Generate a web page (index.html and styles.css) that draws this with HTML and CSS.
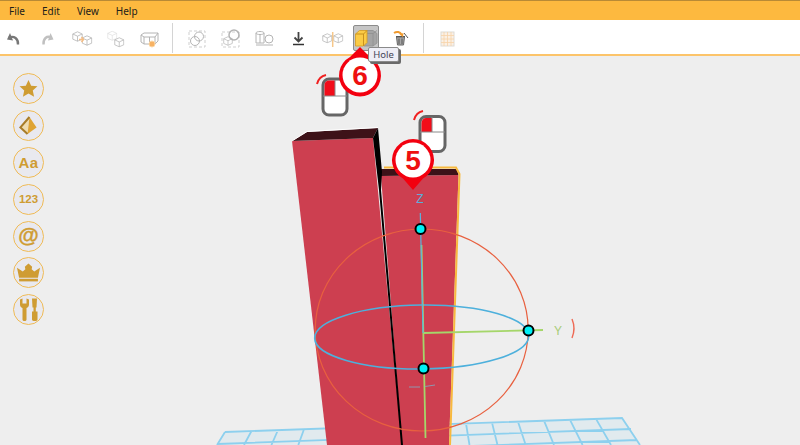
FILE: index.html
```html
<!DOCTYPE html>
<html lang="en">
<head>
<meta charset="utf-8">
<title>3D modeller</title>
<link rel="stylesheet" href="styles.css">
</head>
<body>
<svg class="defs" width="0" height="0" aria-hidden="true">
  <defs>
    <symbol id="cube" viewBox="0 0 14 14">
      <path d="M7 1 13 3.8V10.4L7 13 1 10.4V3.8Z M1 3.8 7 6.6 13 3.8 M7 6.6V13"/>
    </symbol>
  </defs>
</svg>
<div class="app">
  <nav class="menubar">
    <span>File</span><span>Edit</span><span>View</span><span>Help</span>
  </nav>
  <div class="toolbar">
    <div class="group">
      <div class="tool"><svg viewBox="0 0 28 28"><path class="undo" d="M18 20.500C18.500 14.500 14 11.500 9 13.500"/><path class="undo-head" d="M10 9 7 15.500 13 16.500Z"/></svg></div>
      <div class="tool"><svg viewBox="0 0 28 28"><path class="redo" d="M9.500 20.500C9 14.500 13 11.500 17 13.500"/><path class="redo-head" d="M16.500 9 19.500 15.500 14 16.500Z"/></svg></div>
      <div class="tool"><svg viewBox="0 0 28 28"><use class="cube" href="#cube" x="4" y="7" width="11" height="11"/><use class="cube" href="#cube" x="13.500" y="11" width="11" height="11"/><path class="accent" d="M11 15.500H15.500M13.500 13 15.500 15.500 13.500 18"/></svg></div>
      <div class="tool"><svg viewBox="0 0 28 28"><use class="cube faint" href="#cube" x="5" y="6.500" width="10.500" height="10.500"/><use class="cube" href="#cube" x="12" y="13" width="10.500" height="10.500"/></svg></div>
      <div class="tool"><svg viewBox="0 0 28 28"><path class="cube" d="M5 11 8 9H22V17L19 20H8L5 18Z M5 11 8 13H19L22 9 M8 13V20M13.500 13V20M19 13V20"/><circle class="dot" cx="16" cy="20" r="3"/></svg></div>
    </div>
    <div class="divider"></div>
    <div class="group">
      <div class="tool"><svg viewBox="0 0 28 28"><rect class="sel" x="7" y="7" width="16" height="16"/><circle class="cube" cx="17" cy="12.500" r="4.500"/><circle class="cube" cx="13" cy="17" r="4.500"/></svg></div>
      <div class="tool"><svg viewBox="0 0 28 28"><rect class="sel" x="6" y="8" width="17" height="15"/><circle class="cube thick" cx="18" cy="11" r="5"/><use class="cube" href="#cube" x="7" y="12" width="10" height="10"/></svg></div>
      <div class="tool"><svg viewBox="0 0 28 28"><path class="cube" d="M6 9C6 7 14 7 14 9V19H6Z M6 9C6 11 14 11 14 9 M10 10V19M6 21H23"/><circle class="cube" cx="19" cy="15" r="4"/></svg></div>
      <div class="tool"><svg viewBox="0 0 28 28"><path class="dark" d="M14.500 8V17M10.500 13.500 14.500 17.500 18.500 13.500"/><path class="dark-line" d="M9 20.500H20"/></svg></div>
      <div class="tool"><svg viewBox="0 0 28 28"><use class="cube" href="#cube" x="4" y="9" width="10.500" height="10.500"/><use class="cube" href="#cube" x="15" y="9" width="10.500" height="10.500"/><path class="split" d="M14.700 8V23"/></svg></div>
      <div class="tool tool-active"><svg viewBox="0 0 24 24"><path class="hole-back" d="M11 4.500H19L23 7.500V17L19 20H10Z"/><path class="hole-line" d="M12 7.500H19L23 4.500M19 7.500V20"/><path class="hole-front" d="M1.500 8 5.500 4.500H13V16.500L9.500 20H1.500Z"/><path class="hole-edge" d="M1.500 8H9.500L13 4.500M9.500 8V20"/></svg></div>
      <div class="tool"><svg viewBox="0 0 28 28"><path class="trash" d="M10.500 13H18.500L17.500 21H11.500Z"/><path class="trash-line" d="M10 12.500H19M13 14.500V20M16 14.500V20M18 9 22 14"/><path class="trash-arrow" d="M8 9C11 7 14 8 15.500 10.500"/><path class="trash-head" d="M13.500 10.500 17 13 17.500 9Z"/></svg></div>
    </div>
    <div class="divider divider-last"></div>
    <div class="group">
      <div class="tool"><svg viewBox="0 0 28 28"><rect class="sheet" x="8" y="8" width="13" height="14"/><path class="sheet-line" d="M11 8V22M14.500 8V22M18 8V22M8 11.500H21M8 15H21M8 18.500H21"/></svg></div>
    </div>
  </div>
  <main class="stage">
    <svg class="scene" viewBox="0 55 800 390" width="800" height="390">
      <polygon class="grid-fill" points="225,432 622,418 640,445 217,445"/>
      <path class="grid-line" d="M225 432 622 418 640 445M225 432 217 445M217 444 631 429M470 446 637 440M251.500 431 244 445M278 430 271.400 445M304 429.200 298.300 445M466 423.500 469.500 445M492 422.600 497.500 445M518 421.700 525.700 445M544 420.700 554 445M570 419.800 582.600 445M596 418.900 611 445"/>
      <polygon class="bar" points="381,176 458.500,175 449,445 402,445"/>
      <polygon class="bar-top" points="380,169 457,169 458.500,175 381,176"/>
      <polyline class="outline" points="384,167.500 456,167.500 459.500,174 450,445"/>
      <polygon class="bar" points="292,141 373,138 402,445 327,445"/>
      <polygon class="bar-top" points="292,141 307,132 378,128 373,138"/>
      <polyline class="bar-rim" points="292,141 307,131.500 378,127.500"/>
      <polygon class="bar-edge" points="378,128 382,172 381,190 403,445 401,445 379,190 373,138"/>

      <ellipse class="ball-red" cx="421.700" cy="330" rx="106.500" ry="101"/>
      <ellipse class="ball-blue" cx="421.700" cy="337" rx="107" ry="32" transform="rotate(-0.6 421.700 337)"/>
      <path class="axis-green" d="M421.500 245 425.500 438M423 333 543 330"/>
      <path class="axis-blue" d="M420.300 213 423 333"/>
      <path class="dash" d="M409 387H420M425 386.500 435 385"/>
      <path class="rot-mark" d="M572 319C574.500 325 574.500 332 572 338"/>
      <text class="axis-label axis-z" x="420" y="203">Z</text>
      <text class="axis-label axis-y" x="558" y="335">Y</text>
      <circle class="handle" cx="420.500" cy="229" r="5"/>
      <circle class="handle" cx="528.500" cy="330.500" r="5"/>
      <circle class="handle" cx="423.500" cy="368.500" r="5"/>
    </svg>
    <aside class="rail">
      <div class="rail-btn"><svg viewBox="0 0 20 20"><path class="gold" d="M10 1 12.800 7 19.400 7.700 14.500 12.100 15.900 18.600 10 15.300 4.100 18.600 5.500 12.100 .6 7.700 7.200 7Z"/></svg></div>
      <div class="rail-btn"><svg viewBox="0 0 20 20"><path class="gold-soft" d="M11 1 1.500 12 9 19Z"/><path class="gold-face" d="M11 1 18.500 12 9 19Z"/><path class="gold-dark" d="M11 1 1.500 12 9 19"/></svg></div>
      <div class="rail-btn rail-text">Aa</div>
      <div class="rail-btn rail-num">123</div>
      <div class="rail-btn rail-at">@</div>
      <div class="rail-btn rail-wide"><svg viewBox="0 0 22 20"><path class="gold" d="M2 15 0 5.500 5.500 9 8 7 7.500 4.500 11 1.500 14.500 4.500 14 7 16.500 9 22 5.500 20 15Z"/><rect class="gold" x="2" y="16" width="18" height="2.500"/></svg></div>
      <div class="rail-btn rail-tall"><svg viewBox="0 0 22 24"><path class="gold" d="M2 2V7C2 9 3 10 4.500 10.500V22C4.500 24 8.500 24 8.500 22V10.500C10 10 11 9 11 7V2L8.500 1V6H4.500V1Z"/><path class="gold" d="M14 1H19L18.500 10H17.800V14H19.500V22C19.500 24 14 24 14 22V14H15.500V10H14.500Z"/></svg></div>
    </aside>
  </main>
  <svg class="notes" viewBox="0 0 800 445" width="800" height="445">
    <g class="mouse">
      <rect class="m-body" x="323" y="79" width="24" height="36" rx="6"/>
      <path class="m-key" d="M324.500 96V85C324.500 82 326.500 80.500 329 80.500H335V96Z"/>
      <path class="m-line" d="M323 96H347M335 80V96"/>
      <path class="m-arc" d="M317 84C318 80 321 76 326 75"/>
    </g>
    <g class="mouse">
      <rect class="m-body" x="420" y="116.500" width="25" height="35" rx="6"/>
      <path class="m-key" d="M421.500 132V123C421.500 120 423.500 118 426 118H432V132Z"/>
      <path class="m-line" d="M420 132H445M432 117V132"/>
      <path class="m-arc" d="M414 120C415 116 418 112 423 111"/>
    </g>
    <g>
      <path class="pin" d="M360 47 370 57A21 21 0 1 1 350 57Z"/>
      <circle class="pin-face" cx="360" cy="75" r="17.500"/>
      <text class="pin-text" x="360" y="85">6</text>
    </g>
    <g>
      <path class="pin" d="M413 190 403 178.500A21 21 0 1 1 423 178.500Z"/>
      <circle class="pin-face" cx="413" cy="160" r="17.500"/>
      <text class="pin-text" x="413" y="170">5</text>
    </g>
  </svg>
  <div class="tooltip">Hole</div>
</div>
</body>
</html>
```
FILE: styles.css
```css
* { box-sizing: border-box; }
html, body { margin: 0; padding: 0; }
body {
  width: 800px;
  height: 445px;
  overflow: hidden;
  background: #eeeeee;
  font-family: "Noto Sans", "Liberation Sans", sans-serif;
}
.defs { position: absolute; }
.app { position: relative; width: 800px; height: 445px; }

.menubar {
  height: 20px;
  display: flex;
  align-items: center;
  gap: 17px;
  padding-left: 9px;
  background: #fdb93f;
  border-top: 1px solid #b98a35;
  font-size: 10px;
  color: #22201a;
}
.toolbar {
  height: 36px;
  display: flex;
  align-items: center;
  padding-top: 2px;
  background: #ffffff;
  border-bottom: 2px solid #fcc46a;
}
.group { display: flex; gap: 6px; }
.tool {
  width: 28px;
  height: 28px;
  display: flex;
  align-items: center;
  justify-content: center;
}
.tool svg { width: 28px; height: 28px; flex: none; display: block; fill: none; filter: blur(.35px); }
.tool-active svg { width: 24px; height: 24px; }
.tool-active {
  width: 26px;
  height: 26px;
  margin: 1px;
  background: #c6c6c6;
  border: 1.500px solid #8c8c8c;
  border-radius: 2px;
}
.divider { width: 1px; height: 30px; margin: 0 9px 0 8px; background: #d4d4d4; }
.divider-last { margin: 0 9px; }

.undo { fill: none; stroke: #777777; stroke-width: 2.400; }
.undo-head { fill: #777777; }
.redo { fill: none; stroke: #c0c0c0; stroke-width: 2.400; }
.redo-head { fill: #c0c0c0; }
.cube { fill: none; stroke: #b4b4b4; stroke-width: 1; }
.cube.faint { stroke: #e0e0e0; }
.cube.thick { stroke-width: 1.500; }
.accent { fill: none; stroke: #f5bd84; stroke-width: 1.500; }
.dot { fill: #f7b264; stroke: #fbd7a6; stroke-width: 1; }
.sel { fill: none; stroke: #cfcfcf; stroke-width: 1; stroke-dasharray: 3 2; }
.dark { fill: none; stroke: #444444; stroke-width: 1.800; }
.dark-line { fill: none; stroke: #333333; stroke-width: 1.500; }
.split { fill: none; stroke: #f6c78a; stroke-width: 1.500; }
.hole-back { fill: #a4a4a4; stroke: #8f8f8f; stroke-width: .8; }
.hole-line { fill: none; stroke: #8f8f8f; stroke-width: .8; }
.hole-front { fill: #fbcb45; stroke: #d69c20; stroke-width: .8; }
.hole-edge { fill: none; stroke: #c9921e; stroke-width: 1; }
.trash { fill: #a6a6a6; stroke: #666666; stroke-width: 1; }
.trash-line { fill: none; stroke: #555555; stroke-width: 1; }
.trash-arrow { fill: none; stroke: #f09a2e; stroke-width: 2; }
.trash-head { fill: #f09a2e; }
.sheet { fill: #fbf0e4; stroke: #dedbd6; stroke-width: 1; }
.sheet-line { fill: none; stroke: #f8d3a8; stroke-width: .8; }

.stage { position: relative; height: 389px; overflow: hidden; }
.scene { position: absolute; left: 0; top: -1px; display: block; }
.grid-fill { fill: #e1eaee; }
.grid-line { fill: none; stroke: #8dd0ee; stroke-width: 1.800; }
.bar { fill: #cd3f50; }
.bar-top { fill: #3d1218; }
.bar-rim { fill: none; stroke: #ffffff; stroke-width: 1; }
.bar-edge { fill: #000000; }
.outline { fill: none; stroke: #f8b93e; stroke-width: 2; }
.ball-red { fill: none; stroke: #e8603f; stroke-width: 1.200; }
.ball-blue { fill: none; stroke: #4db0dc; stroke-width: 1.600; }
.axis-green { fill: none; stroke: #a5d66a; stroke-width: 1.800; }
.axis-blue { fill: none; stroke: #5ab4de; stroke-width: 1.200; }
.dash { fill: none; stroke: #8f97ad; stroke-width: 1; }
.rot-mark { fill: none; stroke: #ee6a55; stroke-width: 1.400; }
.axis-label { font-family: "Liberation Sans", sans-serif; font-size: 12px; text-anchor: middle; }
.axis-z { fill: #5aaedc; }
.axis-y { fill: #a8cc78; }
.handle { fill: #00f0f5; stroke: #000000; stroke-width: 2; }

.rail {
  position: absolute;
  left: 13px;
  top: 17px;
  display: flex;
  flex-direction: column;
  gap: 5.900px;
}
.rail-btn {
  width: 31px;
  height: 31px;
  display: flex;
  align-items: center;
  justify-content: center;
  border: 1.500px solid #f0bb55;
  border-radius: 50%;
  background: #e9e9ef;
  color: #cf9c33;
  font-family: "Liberation Sans", sans-serif;
  font-weight: 700;
}
.rail-btn svg { width: 19px; height: 19px; display: block; filter: blur(.25px); }
.rail-wide svg { width: 23px; height: 21px; }
.rail-tall svg { width: 22px; height: 25px; }
.rail-text { font-size: 15px; letter-spacing: .5px; }
.rail-num { font-size: 11.500px; }
.rail-at { font-size: 21px; padding-bottom: 2px; -webkit-text-stroke: .4px #cf9c33; }
.gold { fill: #cf9c33; }
.gold-soft { fill: #efdcb0; }
.gold-face { fill: #dfa435; }
.gold-dark { fill: none; stroke: #a87c28; stroke-width: 2.200; }

.notes { position: absolute; left: 0; top: 0; pointer-events: none; }
.m-body { fill: #ffffff; stroke: #666666; stroke-width: 3; }
.m-key { fill: #f20d1a; }
.m-line { fill: none; stroke: #8a8a8a; stroke-width: 1; }
.m-arc { fill: none; stroke: #f02020; stroke-width: 2; }
.pin { fill: #f3000f; }
.pin-face { fill: #ffffff; }
.pin-text {
  fill: #ee1010;
  font-family: "Liberation Sans", sans-serif;
  font-size: 28px;
  font-weight: 700;
  text-anchor: middle;
}
.tooltip {
  position: absolute;
  left: 368px;
  top: 47px;
  width: 31px;
  height: 15px;
  display: flex;
  align-items: center;
  justify-content: center;
  background: #eeeef5;
  border: 1px solid #8a8a8a;
  border-radius: 2px;
  box-shadow: 2px 2px 0 #6a6a6a;
  font-size: 9.500px;
  color: #445;
}
```
